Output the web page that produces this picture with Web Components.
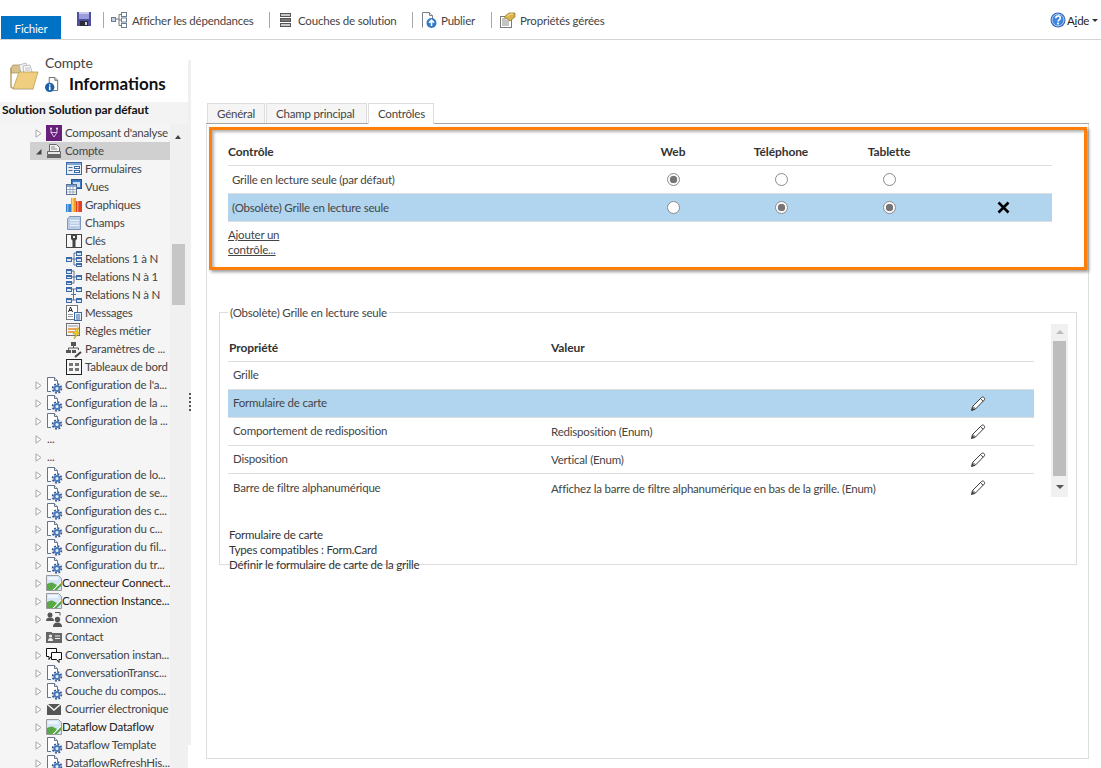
<!DOCTYPE html>
<html lang="fr">
<head>
<meta charset="utf-8">
<title>Compte - Informations</title>
<style>
  html, body { margin: 0; height: 100%; background: #fff; overflow: hidden; }
  body { font: 11.5px/15px Lato, "Noto Sans", sans-serif; letter-spacing: -.2px; color: #444; }
  #app { display: flex; flex-direction: column; width: 1101px; height: 768px; overflow: hidden; }
  #content { display: flex; flex: 1; min-height: 0; }
</style>
</head>
<body>
<div id="app">
  <app-ribbon>
    <ribbon-button icon="deps" pad="7" gap="5" style="width:166px">Afficher les dépendances</ribbon-button>
    <ribbon-button icon="layers" pad="8" gap="4" style="width:143px">Couches de solution</ribbon-button>
    <ribbon-button icon="publish" pad="8" gap="4" style="width:79px">Publier</ribbon-button>
    <ribbon-button icon="managed" pad="7" gap="5" style="width:124px">Propriétés gérées</ribbon-button>
  </app-ribbon>
  <div id="content">
    <app-sidebar>
      <tree-item icon="analytics">Composant d'analyse</tree-item>
      <tree-item icon="entity" expanded selected>Compte</tree-item>
      <tree-item level="2" icon="forms">Formulaires</tree-item>
      <tree-item level="2" icon="views">Vues</tree-item>
      <tree-item level="2" icon="charts">Graphiques</tree-item>
      <tree-item level="2" icon="fields">Champs</tree-item>
      <tree-item level="2" icon="keys">Clés</tree-item>
      <tree-item level="2" icon="rel1n">Relations 1 à N</tree-item>
      <tree-item level="2" icon="reln1">Relations N à 1</tree-item>
      <tree-item level="2" icon="relnn">Relations N à N</tree-item>
      <tree-item level="2" icon="messages">Messages</tree-item>
      <tree-item level="2" icon="rules">Règles métier</tree-item>
      <tree-item level="2" icon="params">Paramètres de ...</tree-item>
      <tree-item level="2" icon="dash">Tableaux de bord</tree-item>
      <tree-item icon="cfg">Configuration de l'a...</tree-item>
      <tree-item icon="cfg">Configuration de la ...</tree-item>
      <tree-item icon="cfg">Configuration de la ...</tree-item>
      <tree-item icon="none">...</tree-item>
      <tree-item icon="none">...</tree-item>
      <tree-item icon="cfg">Configuration de lo...</tree-item>
      <tree-item icon="cfg">Configuration de se...</tree-item>
      <tree-item icon="cfg">Configuration des c...</tree-item>
      <tree-item icon="cfg">Configuration du c...</tree-item>
      <tree-item icon="cfg">Configuration du fil...</tree-item>
      <tree-item icon="cfg">Configuration du tr...</tree-item>
      <tree-item icon="broken">Connecteur Connect...</tree-item>
      <tree-item icon="broken">Connection Instance...</tree-item>
      <tree-item icon="people">Connexion</tree-item>
      <tree-item icon="contact">Contact</tree-item>
      <tree-item icon="chat">Conversation instan...</tree-item>
      <tree-item icon="cfg">ConversationTransc...</tree-item>
      <tree-item icon="cfg">Couche du compos...</tree-item>
      <tree-item icon="mail">Courrier électronique</tree-item>
      <tree-item icon="broken">Dataflow Dataflow</tree-item>
      <tree-item icon="cfg">Dataflow Template</tree-item>
      <tree-item icon="cfg">DataflowRefreshHis...</tree-item>
    </app-sidebar>
    <main-panel>
      <tab-item slot="tabs" style="width:58px">Général</tab-item>
      <tab-item slot="tabs" style="width:101px">Champ principal</tab-item>
      <tab-item slot="tabs" style="width:66px" active>Contrôles</tab-item>
      <controls-box>
        <control-row head>Contrôle</control-row>
        <control-row marks="100">Grille en lecture seule (par défaut)</control-row>
        <control-row marks="011" selected removable>(Obsolète) Grille en lecture seule</control-row>
      </controls-box>
      <props-group legend="(Obsolète) Grille en lecture seule">
        <prop-row head value="Valeur">Propriété</prop-row>
        <prop-row>Grille</prop-row>
        <prop-row selected edit>Formulaire de carte</prop-row>
        <prop-row edit value="Redisposition (Enum)">Comportement de redisposition</prop-row>
        <prop-row edit value="Vertical (Enum)">Disposition</prop-row>
        <prop-row edit last value="Affichez la barre de filtre alphanumérique en bas de la grille. (Enum)">Barre de filtre alphanumérique</prop-row>
        <span slot="desc">Formulaire de carte</span>
        <span slot="desc">Types compatibles : Form.Card</span>
        <span slot="desc">Définir le formulaire de carte de la grille</span>
      </props-group>
    </main-panel>
  </div>
</div>

<script>
const cfgDoc = `<path d="M1.5 14.500V.5h7l3 3V7" fill="#fff" stroke="#66758f"/><path d="M8.5.5v3h3" fill="#dfe6f2" stroke="#66758f"/><path d="M1.500 9v5.500H5" fill="none" stroke="#66758f"/>`
const gear = `<circle cx="11" cy="11.500" r="4.400" fill="none" stroke="#2c528f" stroke-width="1.700" stroke-dasharray="1.800 1.650"/><circle cx="11" cy="11.500" r="3.600" fill="#4a78bb"/><circle cx="11" cy="11.500" r="1.500" fill="#e6eefa"/>`
const boxes = (list, lines) => `<path d="${lines}" fill="none" stroke="#5b6f8f"/>` + list.map(([x, y, w, h]) => `<rect x="${x}.5" y="${y}.5" width="${w}" height="${h}" fill="#dbe6f5" stroke="#3c69a8"/><rect x="${x + 1}" y="${y + 1}" width="${w - 1}" height="1" fill="#3c69a8"/>`).join('')

const ICONS = {
  none: '',
  save: `<rect x="1" y="1" width="14" height="14" fill="#4c4f9a"/><rect x="3" y="1" width="10" height="7" fill="#9c9cdc"/><rect x="3" y="1" width="10" height="2" fill="#c9c9ef"/><rect x="4" y="10" width="8" height="5" fill="#2b2b3a"/><rect x="9" y="11" width="2" height="3" fill="#d8d8d8"/>`,
  deps: `<path d="M5 7h3M8 2.500v11M8 2.500h2M8 8h2M8 13.500h2" fill="none" stroke="#777"/><rect x=".5" y="5.500" width="4" height="4" fill="#c4d3e6" stroke="#6d7c90"/><rect x="10.500" y=".5" width="5" height="4" fill="#fff" stroke="#6d7c90"/><rect x="10.500" y="6" width="5" height="4" fill="#fff" stroke="#6d7c90"/><rect x="10.500" y="11.500" width="5" height="4" fill="#fff" stroke="#6d7c90"/>`,
  layers: `<rect x="2.500" y="1.500" width="10" height="3" fill="#c9c9c9" stroke="#555"/><rect x="2.500" y="6.500" width="10" height="3" fill="#777" stroke="#555"/><rect x="2.500" y="11.500" width="10" height="3" fill="#c9c9c9" stroke="#555"/>`,
  publish: `<path d="M1.500 15.500V.5h7l3 3v4" fill="#fff" stroke="#7a7f8c"/><path d="M8.500.5v3h3" fill="#e6e9ef" stroke="#7a7f8c"/><circle cx="10.500" cy="11" r="5" fill="#2f78c4"/><path d="M10.500 14V8.500M8 10.700l2.500-2.600 2.500 2.600" fill="none" stroke="#fff" stroke-width="1.600"/>`,
  managed: `<rect x="1.500" y="4.500" width="11" height="11" fill="#fff" stroke="#7b7b7b"/><path d="M3 7h4M3 9h7M3 11h7M3 13h7" stroke="#8a8a8a"/><path d="M5 5l5-4h6v4l-5 4z" fill="#d8b24c" stroke="#8d7427" stroke-width=".7"/><path d="M8 4.500l3-2.400h3" fill="none" stroke="#f3e3a6"/>`,
  help: `<circle cx="8" cy="8" r="7.500" fill="#2a62b8"/><circle cx="8" cy="8" r="6" fill="#3f86dc" stroke="#bcd6f5"/><path d="M5.800 6.200c0-3 4.600-3 4.600-.2 0 1.800-2.400 1.800-2.400 3.600" fill="none" stroke="#fff" stroke-width="1.600"/><rect x="7.100" y="10.600" width="1.800" height="1.800" fill="#fff"/>`,
  folder: `<path d="M3 6l2-3h7l1 2h6v6H3z" fill="#d9c28c" stroke="#9f8a58" stroke-width=".7"/><path d="M11 3l7-2 2 8-7 2z" fill="#f4f4f4" stroke="#a5a5a5" stroke-width=".7"/><path d="M15 4l7-1 2 7-8 2z" fill="#fafafa" stroke="#a5a5a5" stroke-width=".7"/><path d="M17 6h5M17 8h5" stroke="#bcbcbc"/><path d="M3 6v19l3 2" fill="none" stroke="#b8a26a" stroke-width="1.500"/><path d="M11 10h19l-5 17H5z" fill="#efce7f" stroke="#b39650" stroke-width=".7"/><path d="M6 27h19l1 1H7z" fill="#cfcfcf"/>`,
  info: `<path d="M4.500 12V.5h6l3 3v11H8" fill="#fff" stroke="#666"/><path d="M10.500.5v3h3" fill="#ddd" stroke="#666"/><circle cx="5" cy="11" r="5" fill="#1d5fa8"/><rect x="4.200" y="10" width="1.700" height="4" fill="#fff"/><rect x="4.200" y="7.800" width="1.700" height="1.400" fill="#fff"/>`,
  analytics: `<rect width="16" height="16" fill="#68217a"/><path d="M5 3.500v4l3 4.500 3-4.500v-4M5 7.500h6" fill="none" stroke="#e8d6ee" stroke-width=".9"/><circle cx="5" cy="3.500" r=".9" fill="#fff"/><circle cx="11" cy="3.500" r=".9" fill="#fff"/>`,
  entity: `<path d="M3.500 8V1.500h7l3 3V8" fill="#f2f2f2" stroke="#666"/><path d="M5 4h4M5 6h6" stroke="#888"/><path d="M1.500 8.500h13v3h-13z" fill="#e8e8e8" stroke="#666"/><rect x="1" y="12" width="14" height="3" fill="#666"/>`,
  forms: `<rect x=".5" y="1.500" width="15" height="12" fill="#e8eff9" stroke="#3c69a8"/><rect x="1" y="2" width="14" height="2" fill="#7fa4d6"/><path d="M2.500 6.500h4M2.500 9.500h4" stroke="#5a6d8a" stroke-width="1.200"/><rect x="8.500" y="5.500" width="5" height="2" fill="#fff" stroke="#3c69a8"/><rect x="8.500" y="9.500" width="5" height="2" fill="#fff" stroke="#3c69a8"/>`,
  views: `<rect x="5.500" y=".5" width="10" height="9" fill="#3f78c4" stroke="#2c528f"/><rect x="7" y="3" width="7" height="5" fill="#cfe0f5"/><rect x=".5" y="5.500" width="10" height="10" fill="#fff" stroke="#5c6f94"/><rect x="1" y="6" width="9" height="2" fill="#7fa4d6"/><path d="M1 10.500h9M1 13h9M4 8v7M7 8v7" stroke="#9aa7ba"/>`,
  charts: `<rect x="0" y="7" width="5" height="8" fill="#2f80d0"/><rect x="1" y="7" width="1.500" height="8" fill="#78b4ee"/><rect x="5" y="1" width="5" height="14" fill="#f0a020"/><rect x="6" y="1" width="1.500" height="14" fill="#fbd27a"/><rect x="10" y="4" width="6" height="11" fill="#e0431f"/><rect x="11" y="4" width="1.500" height="11" fill="#f58e6f"/>`,
  fields: `<path d="M3.500 1.500h11v13h-13V4z" fill="#b9cde6" stroke="#7e97b8"/><path d="M4 5.500h9M4 8h9M4 10.500h9" stroke="#eef4fb"/>`,
  keys: `<rect x=".5" y="1.500" width="15" height="13" fill="#f7f7f7" stroke="#444"/><path d="M5 1h6v5l-1.500 1.500V14h-3V7.500L5 6z" fill="#444"/><rect x="7" y="3" width="2" height="2" fill="#eee"/>`,
  rel1n: boxes([[0, 6, 5, 4], [10, 0, 5, 4], [10, 6, 5, 4], [10, 12, 5, 3]], 'M5 8h3M8 2v12M8 2h2M8 8h2M8 14h2'),
  reln1: boxes([[0, 0, 5, 4], [0, 6, 5, 3], [0, 12, 5, 3], [10, 6, 5, 4]], 'M5 2h3M8 2v12M5 14h3M5 8h5'),
  relnn: boxes([[0, 0, 5, 4], [10, 0, 5, 4], [0, 11, 5, 4], [10, 11, 5, 4]], 'M5 2h2.500v11H5M10 2H7.500M10 13H7.500M5 7.500h5'),
  messages: `<rect x=".5" y=".5" width="11" height="14" fill="#fff" stroke="#777"/><path d="M2.500 7l2-5 2 5M3.200 5.500h2.600" fill="none" stroke="#222"/><path d="M2 9.500h5M2 11.500h5" stroke="#999"/><rect x="8.500" y="7.500" width="7" height="8" fill="#e5eef9" stroke="#3c69a8"/><path d="M10 10h4M10 12h4M10 14h4" stroke="#3c69a8"/>`,
  rules: `<rect x=".5" y=".5" width="13" height="12" fill="#f4f4f4" stroke="#6e6e6e"/><path d="M2 3h10" stroke="#999"/><path d="M2 6h8M2 9h6" stroke="#e08b2c" stroke-width="1.500"/><path d="M11 5l-4 6h3l-2 5 6-7h-3l2-4z" fill="#f5cf2a" stroke="#a98a12" stroke-width=".6"/>`,
  params: `<rect x="5" y="1" width="5" height="4" fill="#555"/><path d="M7.500 5v2M2.500 9V7h10v2" fill="none" stroke="#555"/><rect x="0" y="9" width="5" height="3" fill="#555"/><rect x="6" y="9" width="4" height="3" fill="#555"/><path d="M9 16l6-5" stroke="#444" stroke-width="2"/>`,
  dash: `<rect x=".5" y=".5" width="15" height="15" fill="#f7f7f7" stroke="#222"/><rect x="3" y="4" width="4" height="3" fill="#777"/><rect x="9" y="4" width="4" height="3" fill="#777"/><rect x="3" y="9" width="4" height="3" fill="#777"/><rect x="9" y="9" width="4" height="3" fill="#777"/>`,
  cfg: cfgDoc + gear,
  broken: `<path d="M.5.5h12l3 3v12H.5z" fill="#d6e6f8" stroke="#9b9b9b"/><path d="M2 2h10v3H2z" fill="#eef5fc"/><path d="M1 15V9q5-3 8 0l2 1-4 5z" fill="#58a845"/><path d="M8 15l7-7v3l-4 4z" fill="#58a845"/><path d="M7 15l8-8" stroke="#fff"/>`,
  people: `<circle cx="4" cy="4" r="2.500" fill="#555"/><path d="M0 10q0-3.500 4-3.500t4 3.500z" fill="#555"/><circle cx="11.500" cy="8.500" r="2.700" fill="#555"/><path d="M7 16q0-4.500 4.500-4.500T16 16z" fill="#555"/><path d="M9 1.500h5v3" fill="none" stroke="#555"/>`,
  contact: `<path d="M0 3h6v1h10v10H0z" fill="#666"/><circle cx="4.500" cy="7" r="1.600" fill="#eee"/><path d="M2 12q0-3 2.500-3T7 12z" fill="#eee"/><path d="M9 7h5M9 9.500h5" stroke="#eee"/>`,
  chat: `<path d="M.5 1.500h10v8H5l-2 3v-3H.5z" fill="#fff" stroke="#111"/><path d="M5.500 5.500h10v7H13v3l-2.500-3H5.500z" fill="#fff" stroke="#111"/>`,
  mail: `<path d="M1 3h14v11H1z" fill="#555"/><path d="M1 3l7 6 7-6" fill="none" stroke="#f3f3f3" stroke-width="1.400"/>`,
  pencil: `<path d="M1.500 14.500l1-4L11.500 1.500c1-.8 2.200-.5 2.800.3.500.7.500 1.700-.2 2.400L5.200 13.300z" fill="#fff" stroke="#3f3f3f"/><path d="M1.500 14.500l.8-3.200 2.500 2.300z" fill="#3f3f3f"/><path d="M3 10.500l2.500 2.500M10.500 2.700l2.700 2.600" stroke="#3f3f3f" fill="none"/>`
}

class UiIcon extends HTMLElement {
  constructor () {
    super()
    this.attachShadow({ mode: 'open' })
  }

  static get observedAttributes () {
    return ['name']
  }

  attributeChangedCallback () {
    this.render()
  }

  connectedCallback () {
    this.render()
  }

  render () {
    const size = this.getAttribute('size') || 16
    const box = this.getAttribute('box') || 16
    this.shadowRoot.innerHTML = `
      <style>
        :host { display: block; width: ${size}px; height: ${size}px; flex: none; }
        svg { display: block; width: 100%; height: 100%; overflow: visible; }
      </style>
      <svg viewBox="0 0 ${box} ${box}" aria-hidden="true">${ICONS[this.getAttribute('name')] || ''}</svg>`
  }
}
customElements.define('ui-icon', UiIcon)

const ribbonTemplate = document.createElement('template')
ribbonTemplate.innerHTML = `
  <style>
  :host {
    display: flex;
    align-items: flex-start;
    height: 40px;
    box-sizing: border-box;
    border-bottom: 1px solid #d4d4d4;
    padding-left: 1px;
    flex: none;
    color: #444;
  }
  #file {
    width: 60px;
    height: 23px;
    margin-top: 16px;
    background: #0072c6;
    color: #fff;
    text-align: center;
    line-height: 26px;
  }
  #save { margin: 11px 11px 0 15px; }
  #items { display: flex; margin-top: 12px; height: 16px; }
  #help {
    margin-left: auto;
    margin-top: 12px;
    margin-right: 3px;
    display: flex;
    align-items: center;
    color: #222;
  }
  #help span:first-of-type { width: 22px; padding-left: 1px; box-sizing: border-box; }
  #caret {
    margin-left: 4px;
    border: 3px solid transparent;
    border-top: 3px solid #333;
    border-bottom: 0;
  }
  </style>
  <div id="file">Fichier</div>
  <ui-icon id="save" name="save"></ui-icon>
  <div id="items"><slot></slot></div>
  <div id="help"><ui-icon name="help"></ui-icon><span>A<u>i</u>de</span><span id="caret"></span></div>
`
class AppRibbon extends HTMLElement {
  constructor () {
    super()
    this.attachShadow({ mode: 'open' }).append(ribbonTemplate.content.cloneNode(true))
  }
}
customElements.define('app-ribbon', AppRibbon)

const ribbonButtonTemplate = document.createElement('template')
ribbonButtonTemplate.innerHTML = `
  <style>
  :host {
    display: flex;
    align-items: center;
    white-space: nowrap;
    box-sizing: border-box;
    height: 16px;
    border-left: 1px solid #a8a8a8;
  }
  </style>
  <ui-icon></ui-icon><span><slot></slot></span>
`
class RibbonButton extends HTMLElement {
  constructor () {
    super()
    this.attachShadow({ mode: 'open' }).append(ribbonButtonTemplate.content.cloneNode(true))
  }

  connectedCallback () {
    const icon = this.shadowRoot.querySelector('ui-icon')
    icon.setAttribute('name', this.getAttribute('icon'))
    icon.style.marginRight = this.getAttribute('gap') + 'px'
    this.style.paddingLeft = this.getAttribute('pad') + 'px'
  }
}
customElements.define('ribbon-button', RibbonButton)

const sidebarTemplate = document.createElement('template')
sidebarTemplate.innerHTML = `
  <style>
  :host { display: flex; width: 191px; flex: none; height: 100%; }
  #col { width: 188px; display: flex; flex-direction: column; }
  #head { height: 62px; box-sizing: border-box; padding: 15px 0 0 8px; display: flex; gap: 7px; flex: none; }
  #folder { margin-top: 7px; }
  #entity { font-size: 14px; line-height: 16px; color: #444; }
  #title { display: flex; align-items: center; gap: 9px; margin-top: 5px; height: 16px; }
  #title b { font-size: 17px; font-weight: 700; color: #111; line-height: 16px; letter-spacing: 0; }
  #solution {
    height: 22px;
    flex: none;
    padding-left: 2px;
    font-size: 12px;
    letter-spacing: -.1px;
    line-height: 16px;
    font-weight: 700;
    color: #111;
    background: #f3f3f3;
    white-space: nowrap;
  }
  #body { flex: 1; display: flex; min-height: 0; overflow: hidden; background: #f0f0f0; }
  #tree { width: 170px; flex: none; background: #f5f5f5; }
  #bar { flex: 1; position: relative; display: flex; flex-direction: column; align-items: flex-start; }
  #up {
    margin: 11px 0 0 5px;
    border: 3.5px solid transparent;
    border-bottom: 4px solid #444;
    border-top: 0;
  }
  #thumb { width: 13px; height: 61px; margin: 105px 0 0 2px; background: #c6c6c6; }
  #strip { width: 3px; height: 685px; margin-top: 20px; background: #f0f0f0; padding-top: 333px; box-sizing: border-box; }
  #grip {
    width: 2px;
    height: 19px;
    margin-left: 1px;
    background: repeating-linear-gradient(#555 0 2px, transparent 2px 4px);
  }
  </style>
  <div id="col">
    <div id="head">
      <ui-icon id="folder" name="folder" size="30" box="30"></ui-icon>
      <div>
        <div id="entity">Compte</div>
        <div id="title"><ui-icon name="info" size="15"></ui-icon><b>Informations</b></div>
      </div>
    </div>
    <div id="solution">Solution Solution par défaut</div>
    <div id="body">
      <div id="tree"><slot></slot></div>
      <div id="bar"><div id="up"></div><div id="thumb"></div></div>
    </div>
  </div>
  <div id="strip"><div id="grip"></div></div>
`
class AppSidebar extends HTMLElement {
  constructor () {
    super()
    this.attachShadow({ mode: 'open' }).append(sidebarTemplate.content.cloneNode(true))
  }
}
customElements.define('app-sidebar', AppSidebar)

const treeItemTemplate = document.createElement('template')
treeItemTemplate.innerHTML = `
  <style>
  :host {
    display: flex;
    align-items: center;
    height: 18px;
    margin-left: 30px;
    white-space: nowrap;
    overflow: hidden;
    color: #444;
  }
  :host([selected]) { background: #d0d0d0; }
  #arrow { width: 16px; flex: none; display: flex; padding-left: 5px; box-sizing: border-box; }
  #arrow svg { display: block; width: 7px; height: 9px; }
  :host([level="2"]) #arrow { width: 36px; }
  :host([level="2"]) #arrow svg { display: none; }
  #label { margin-left: 3px; padding-bottom: 2px; }
  :host([icon="broken"]) #label { margin-left: 0; color: #222; }
  :host([icon="none"]) #label { margin-left: 1px; }
  </style>
  <div id="arrow"><svg viewBox="0 0 7 9"><path d="M1 .8v7.400L6 4.500z" fill="#fff" stroke="#a6a6a6"/></svg></div>
  <ui-icon></ui-icon>
  <span id="label"><slot></slot></span>
`
class TreeItem extends HTMLElement {
  constructor () {
    super()
    this.attachShadow({ mode: 'open' }).append(treeItemTemplate.content.cloneNode(true))
  }

  connectedCallback () {
    const icon = this.shadowRoot.querySelector('ui-icon')
    if (this.getAttribute('icon') === 'none') icon.setAttribute('size', '0')
    icon.setAttribute('name', this.getAttribute('icon'))
    if (this.hasAttribute('expanded')) {
      this.shadowRoot.querySelector('#arrow svg').innerHTML = '<path d="M1 7.500h5.500V2z" fill="#444"/>'
    }
  }
}
customElements.define('tree-item', TreeItem)

const panelTemplate = document.createElement('template')
panelTemplate.innerHTML = `
  <style>
  :host { display: block; width: 883px; margin: 63px 0 0 15px; flex: none; }
  #tabs { display: flex; height: 21px; box-sizing: border-box; padding-left: 1px; border-bottom: 1px solid #a6a6a6; }
  #page {
    height: 635px;
    box-sizing: border-box;
    padding: 3px 1px 0 2px;
    border: 1px solid #ddd;
    border-top: 0;
  }
  </style>
  <div id="tabs"><slot name="tabs"></slot></div>
  <div id="page"><slot></slot></div>
`
class MainPanel extends HTMLElement {
  constructor () {
    super()
    this.attachShadow({ mode: 'open' }).append(panelTemplate.content.cloneNode(true))
  }
}
customElements.define('main-panel', MainPanel)

const tabTemplate = document.createElement('template')
tabTemplate.innerHTML = `
  <style>
  :host {
    display: block;
    height: 20px;
    box-sizing: border-box;
    padding-left: 9px;
    margin-right: 1px;
    background: #f5f5f5;
    border: 1px solid #ddd;
    border-bottom: 0;
    line-height: 19px;
    color: #444;
    white-space: nowrap;
  }
  :host([active]) { background: #fff; height: 21px; position: relative; }
  </style>
  <slot></slot>
`
class TabItem extends HTMLElement {
  constructor () {
    super()
    this.attachShadow({ mode: 'open' }).append(tabTemplate.content.cloneNode(true))
  }
}
customElements.define('tab-item', TabItem)

const controlsTemplate = document.createElement('template')
controlsTemplate.innerHTML = `
  <style>
  :host {
    display: block;
    width: 878px;
    height: 143px;
    box-sizing: border-box;
    border: 3px solid #ff7f0a;
    padding: 13px 0 0 16px;
    background: #fff;
    box-shadow: 2px 2px 3px rgba(0, 0, 0, .4), inset 2px 2px 3px rgba(0, 0, 0, .3);
  }
  #rows { width: 824px; }
  a {
    display: block;
    width: 60px;
    margin-top: 5px;
    color: #444;
    text-decoration: underline;
  }
  </style>
  <div id="rows"><slot></slot></div>
  <a>Ajouter un contrôle...</a>
`
class ControlsBox extends HTMLElement {
  constructor () {
    super()
    this.attachShadow({ mode: 'open' }).append(controlsTemplate.content.cloneNode(true))
  }
}
customElements.define('controls-box', ControlsBox)

const radioTemplate = document.createElement('template')
radioTemplate.innerHTML = `
  <style>
  :host {
    display: flex;
    align-items: center;
    justify-content: center;
    width: 13px;
    height: 13px;
    box-sizing: border-box;
    border-radius: 50%;
    border: 1px solid #8a8a8a;
    background: #fff;
  }
  :host([checked])::after {
    content: "";
    width: 7px;
    height: 7px;
    border-radius: 50%;
    background: #757575;
    box-shadow: 0 0 1px #757575;
  }
  </style>
`
class RadioDot extends HTMLElement {
  constructor () {
    super()
    this.attachShadow({ mode: 'open' }).append(radioTemplate.content.cloneNode(true))
  }
}
customElements.define('radio-dot', RadioDot)

const controlRowTemplate = document.createElement('template')
controlRowTemplate.innerHTML = `
  <style>
  :host {
    display: grid;
    grid-template-columns: 391px 108px 108px 108px 1fr;
    align-items: center;
    justify-items: center;
    height: 28px;
    box-sizing: border-box;
    border-bottom: 1px solid #ddd;
    color: #444;
  }
  :host([head]) { height: 23px; font-size: 12px; letter-spacing: -.1px; font-weight: 700; color: #333; padding-bottom: 5px; }
  :host([selected]) { background: #b1d5ee; }
  #name { justify-self: start; padding-left: 4px; white-space: nowrap; }
  :host([head]) #name { padding-left: 0; }
  svg { width: 13px; height: 13px; display: block; margin-left: 11px; }
  </style>
  <div id="name"><slot></slot></div>
`
class ControlRow extends HTMLElement {
  constructor () {
    super()
    this.attachShadow({ mode: 'open' }).append(controlRowTemplate.content.cloneNode(true))
  }

  connectedCallback () {
    const root = this.shadowRoot
    if (this.hasAttribute('head')) {
      for (const title of ['Web', 'Téléphone', 'Tablette']) {
        const cell = document.createElement('div')
        cell.textContent = title
        root.append(cell)
      }
      return
    }
    const marks = this.getAttribute('marks')
    for (const mark of marks) {
      const dot = document.createElement('radio-dot')
      if (mark === '1') dot.setAttribute('checked', '')
      root.append(dot)
    }
    if (this.hasAttribute('removable')) {
      const cell = document.createElement('div')
      cell.innerHTML = '<svg viewBox="0 0 13 13"><path d="M1.500 1.500l10 10M11.500 1.500l-10 10" stroke="#000" stroke-width="2.600"/></svg>'
      root.append(cell)
    }
  }
}
customElements.define('control-row', ControlRow)

const groupTemplate = document.createElement('template')
groupTemplate.innerHTML = `
  <style>
  :host {
    display: block;
    position: relative;
    width: 858px;
    height: 253px;
    box-sizing: border-box;
    margin: 42px 0 0 10px;
    border: 1px solid #ddd;
  }
  #legend {
    position: absolute;
    top: -8px;
    left: 8px;
    padding: 0 2px;
    background: #fff;
    color: #444;
  }
  #main { display: flex; align-items: flex-start; padding-left: 8px; }
  #table { width: 806px; margin-top: 22px; }
  #scroll {
    width: 17px;
    height: 173px;
    margin: 11px 0 0 17px;
    background: #f0f0f0;
    display: flex;
    flex-direction: column;
    align-items: center;
    flex: none;
  }
  #up { margin-top: 6px; border: 4px solid transparent; border-top: 0; border-bottom: 4px solid #bbb; }
  #thumb { width: 13px; height: 135px; margin-top: 7px; background: #bdbdbd; }
  #down { margin-top: 9px; border: 4px solid transparent; border-bottom: 0; border-top: 4px solid #555; }
  #desc { display: flex; flex-direction: column; padding: 25px 0 0 9px; position: relative; }
  </style>
  <div id="legend"></div>
  <div id="main">
    <div id="table"><slot></slot></div>
    <div id="scroll"><div id="up"></div><div id="thumb"></div><div id="down"></div></div>
  </div>
  <div id="desc"><slot name="desc"></slot></div>
`
class PropsGroup extends HTMLElement {
  constructor () {
    super()
    this.attachShadow({ mode: 'open' }).append(groupTemplate.content.cloneNode(true))
  }

  connectedCallback () {
    this.shadowRoot.getElementById('legend').textContent = this.getAttribute('legend')
    this.querySelectorAll('[slot="desc"]').forEach(el => { el.style.color = '#333' })
  }
}
customElements.define('props-group', PropsGroup)

const propRowTemplate = document.createElement('template')
propRowTemplate.innerHTML = `
  <style>
  :host {
    display: grid;
    grid-template-columns: 323px 1fr 112px;
    align-items: center;
    height: 28px;
    box-sizing: border-box;
    border-bottom: 1px solid #ddd;
    color: #444;
    white-space: nowrap;
  }
  :host([last]) { border-bottom: 0; }
  :host([head]) { height: 27px; font-size: 12px; letter-spacing: -.1px; font-weight: 700; color: #333; padding-bottom: 2px; }
  :host([selected]) { background: #b1d5ee; }
  #name { padding-left: 5px; padding-bottom: 2px; }
  :host([head]) #name { padding-left: 1px; padding-bottom: 0; }
  #edit { justify-self: center; }
  </style>
  <div id="name"><slot></slot></div>
  <div id="value"></div>
  <div id="edit"></div>
`
class PropRow extends HTMLElement {
  constructor () {
    super()
    this.attachShadow({ mode: 'open' }).append(propRowTemplate.content.cloneNode(true))
  }

  connectedCallback () {
    this.shadowRoot.getElementById('value').textContent = this.getAttribute('value') || ''
    if (this.hasAttribute('edit')) {
      this.shadowRoot.getElementById('edit').innerHTML = '<ui-icon name="pencil"></ui-icon>'
    }
  }
}
customElements.define('prop-row', PropRow)
</script>
</body>
</html>
